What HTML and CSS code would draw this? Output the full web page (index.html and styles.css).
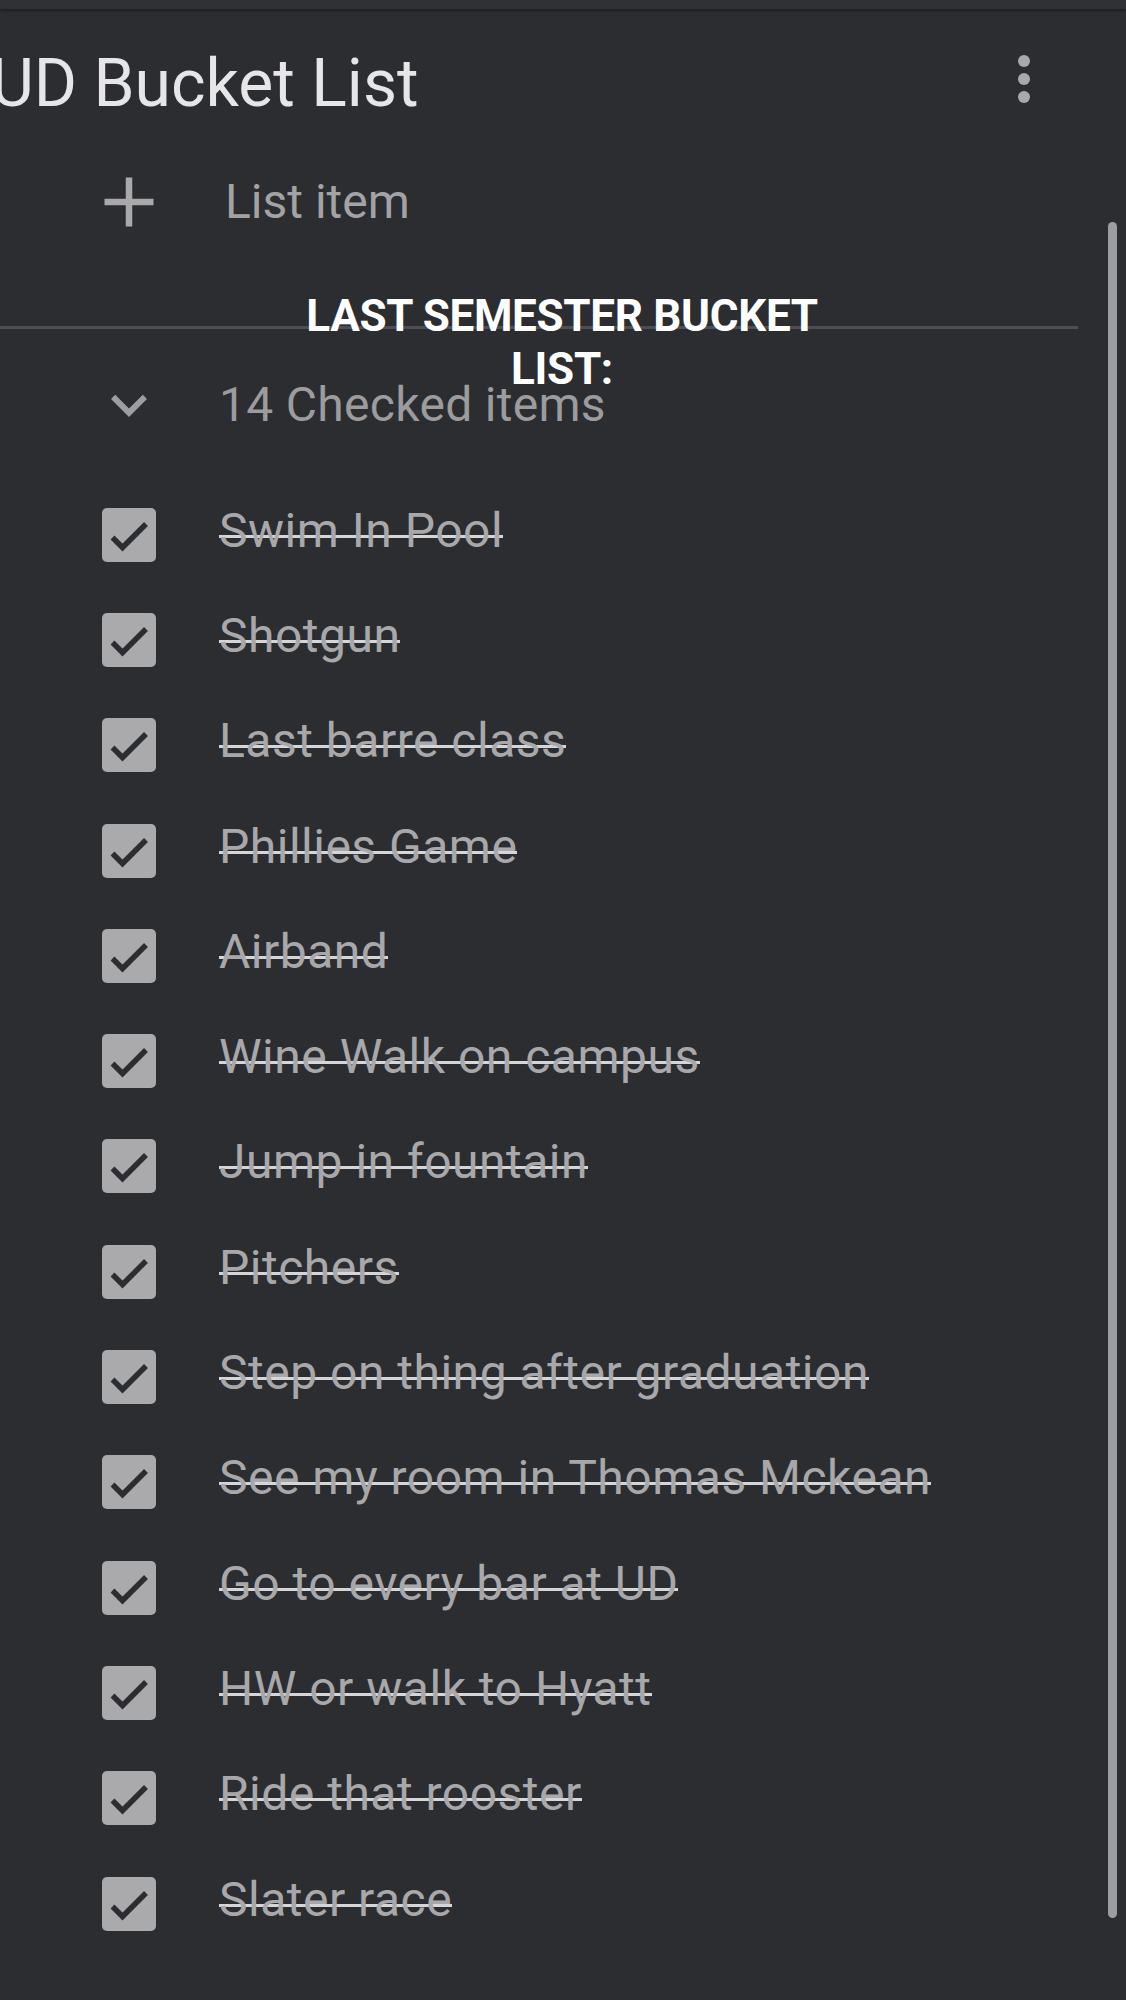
FILE: index.html
```html
<!DOCTYPE html>
<html lang="en">
<head>
    <meta charset="UTF-8">
    <title>UD Bucket List</title>
    <link rel="stylesheet" href="styles.css">
</head>
<body>
    <svg class="defs" width="0" height="0">
        <symbol id="checkbox" viewBox="0 0 54 54">
            <rect x="0" y="0" width="54" height="54" rx="5" fill="#aaaaad"/>
            <polyline points="10.5,29.5 20.5,39.5 44,16" fill="none" stroke="#2c2d31" stroke-width="5.5"/>
        </symbol>
    </svg>

    <div class="status"></div>

    <header class="topbar">
        <h1 class="title">UD Bucket List</h1>
        <span class="menu-btn">
            <svg width="72" height="72" viewBox="0 0 24 24">
                <circle cx="12" cy="6" r="2" fill="#a9a9ac"/>
                <circle cx="12" cy="12" r="2" fill="#a9a9ac"/>
                <circle cx="12" cy="18" r="2" fill="#a9a9ac"/>
            </svg>
        </span>
    </header>

    <div class="add-row">
        <span class="icon">
            <svg width="72" height="72" viewBox="0 0 72 72">
                <path d="M11.5 36h49M36 11.5v49" stroke="#a9a9ac" stroke-width="6.5"/>
            </svg>
        </span>
        <span class="placeholder">List item</span>
    </div>

    <hr class="divider">

    <div class="checked-head">
        <span class="icon">
            <svg width="72" height="72" viewBox="0 0 24 24">
                <path d="M16.59 8.59L12 13.17 7.41 8.59 6 10l6 6 6-6z" fill="#9e9ea2"/>
            </svg>
        </span>
        <span class="checked-count">14 Checked items</span>
    </div>

    <ul class="checked-list">
        <li><span class="icon"><svg width="54" height="54"><use href="#checkbox"/></svg></span><s class="item-text">Swim In Pool</s></li>
        <li><span class="icon"><svg width="54" height="54"><use href="#checkbox"/></svg></span><s class="item-text">Shotgun</s></li>
        <li><span class="icon"><svg width="54" height="54"><use href="#checkbox"/></svg></span><s class="item-text">Last barre class</s></li>
        <li><span class="icon"><svg width="54" height="54"><use href="#checkbox"/></svg></span><s class="item-text">Phillies Game</s></li>
        <li><span class="icon"><svg width="54" height="54"><use href="#checkbox"/></svg></span><s class="item-text">Airband</s></li>
        <li><span class="icon"><svg width="54" height="54"><use href="#checkbox"/></svg></span><s class="item-text">Wine Walk on campus</s></li>
        <li><span class="icon"><svg width="54" height="54"><use href="#checkbox"/></svg></span><s class="item-text">Jump in fountain</s></li>
        <li><span class="icon"><svg width="54" height="54"><use href="#checkbox"/></svg></span><s class="item-text">Pitchers</s></li>
        <li><span class="icon"><svg width="54" height="54"><use href="#checkbox"/></svg></span><s class="item-text">Step on thing after graduation</s></li>
        <li><span class="icon"><svg width="54" height="54"><use href="#checkbox"/></svg></span><s class="item-text">See my room in Thomas Mckean</s></li>
        <li><span class="icon"><svg width="54" height="54"><use href="#checkbox"/></svg></span><s class="item-text">Go to every bar at UD</s></li>
        <li><span class="icon"><svg width="54" height="54"><use href="#checkbox"/></svg></span><s class="item-text">HW or walk to Hyatt</s></li>
        <li><span class="icon"><svg width="54" height="54"><use href="#checkbox"/></svg></span><s class="item-text">Ride that rooster</s></li>
        <li><span class="icon"><svg width="54" height="54"><use href="#checkbox"/></svg></span><s class="item-text">Slater race</s></li>
    </ul>

    <div class="scrollbar"></div>

    <p class="caption">LAST SEMESTER BUCKET LIST:</p>
</body>
</html>
```

FILE: styles.css
```css
body {
    font-family: Roboto, 'Liberation Sans', sans-serif;
    margin: 0;
    background-color: #2c2d31;
    width: 1126px;
    height: 2000px;
    overflow: hidden;
    position: relative;
}

.defs {
    position: absolute;
}

.status {
    height: 9px;
    background-color: #303135;
    box-shadow: 0 2px 3px rgba(0,0,0,0.35);
}

.topbar {
    display: flex;
    justify-content: space-between;
    align-items: flex-start;
    height: 157px;
    box-sizing: border-box;
    padding: 42px 66px 0 0;
}

.title {
    margin: 0 0 0 -9px;
    font-size: 66px;
    line-height: 66px;
    font-weight: 400;
    color: #e6e6e8;
    white-space: nowrap;
}

.menu-btn {
    display: block;
    margin-top: -8px;
}

.menu-btn svg,
.icon svg {
    display: block;
}

.add-row,
.checked-head,
.checked-list li {
    display: flex;
    align-items: center;
    gap: 54px;
    padding-left: 93px;
}

.add-row {
    height: 72px;
}

.icon {
    width: 72px;
    display: flex;
    justify-content: center;
    flex-shrink: 0;
}

.placeholder,
.checked-count {
    font-size: 48px;
    line-height: 72px;
}

.placeholder {
    margin-left: 6px;
    color: #a3a3a6;
}

.checked-count {
    letter-spacing: 0.3px;
    color: #9c9c9f;
}

.divider {
    margin: 88px 0 0;
    width: 1078px;
    height: 3px;
    border: none;
    background-color: #4d4e52;
}

.checked-head {
    margin-top: 40px;
    height: 72px;
}

.checked-list {
    list-style: none;
    margin: 41px 0 0;
    padding: 0;
}

.checked-list li {
    height: 105.3px;
}

.item-text {
    font-size: 48px;
    line-height: 72px;
    letter-spacing: 0.5px;
    padding-bottom: 8px;
    color: #a8a8ab;
    text-decoration: none;
    white-space: nowrap;
    background: linear-gradient(#d6d6d8, #d6d6d8) no-repeat 0 40px / 100% 3px;
}

.scrollbar {
    position: absolute;
    left: 1108px;
    top: 222px;
    width: 9px;
    height: 1696px;
    border-radius: 5px;
    background-color: #9d9da1;
}

.caption {
    position: absolute;
    top: 290px;
    left: 282px;
    width: 560px;
    margin: 0;
    font-size: 44px;
    font-weight: 700;
    line-height: 53px;
    letter-spacing: -0.3px;
    color: #ffffff;
    text-align: center;
}
```
